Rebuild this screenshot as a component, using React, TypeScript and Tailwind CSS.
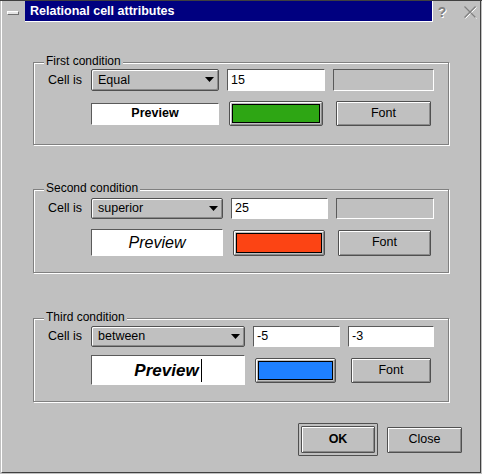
import type { ReactNode } from "react";

const raised =
  "border border-[#505050] bg-[#c0c0c0] shadow-[inset_1px_1px_0_#ffffff,inset_-1px_-1px_0_#8a8a8a]";
const sunken =
  "border border-t-[#5a5a5a] border-l-[#5a5a5a] border-b-white border-r-white";

function Combo({ value, className }: { value: string; className: string }) {
  return (
    <div className={`${raised} rounded-[2px] flex items-center justify-between pl-[6px] pr-[4px] ${className}`}>
      <span className="text-[12.5px] leading-none">{value}</span>
      <svg width="9" height="6" viewBox="0 0 9 6">
        <polygon points="0,0 9,0 4.5,5" fill="#000" />
      </svg>
    </div>
  );
}

function Field({ value, disabled, className }: { value?: string; disabled?: boolean; className: string }) {
  return (
    <div
      className={`${sunken} ${disabled ? "bg-[#c0c0c0]" : "bg-white"} flex items-center pl-[3px] text-[12.5px] leading-none ${className}`}
    >
      {value}
    </div>
  );
}

function Swatch({ color, className }: { color: string; className: string }) {
  return (
    <div className={`${raised} rounded-[2px] p-[2px] ${className}`}>
      <div className="h-full w-full border border-black" style={{ backgroundColor: color }} />
    </div>
  );
}

function Button({ label, bold, className }: { label: string; bold?: boolean; className: string }) {
  return (
    <div
      className={`${raised} rounded-[1px] flex items-center justify-center text-[12.5px] ${bold ? "font-bold" : ""} ${className}`}
    >
      {label}
    </div>
  );
}

function Group({ title, className, children }: { title: string; className: string; children: ReactNode }) {
  return (
    <div className={`relative w-[416px] border border-[#808080] shadow-[inset_1px_1px_0_#ffffff,1px_1px_0_#ffffff] pl-[14px] ${className}`}>
      <span className="absolute left-[10px] -top-[9px] bg-[#c0c0c0] px-[2px] text-[12px] leading-[14px]">
        {title}
      </span>
      {children}
    </div>
  );
}

export default function App() {
  return (
    <div className="w-[482px] h-[474px] bg-[#c0c0c0] border-t border-t-[#404040] font-['Liberation_Sans',Arial,sans-serif] text-black">
      <div className="ml-[1px] w-[480px] h-[472px] border-l border-l-white border-r border-r-[#404040] border-b border-b-[#404040] flex flex-col">
        {/* title bar */}
        <div className="flex h-[21px] shrink-0">
          <div className="w-[23px] flex items-center">
            <div className="ml-[5px] mt-[2px] h-[4px] w-[12px] border border-t-white border-l-white border-b-[#707070] border-r-[#707070] bg-[#e4e4e4]" />
          </div>
          <div className="w-[408px] bg-[#000080] border-r border-b border-white flex items-center pl-[5px]">
            <span className="text-white font-bold text-[12.5px] leading-none">Relational cell attributes</span>
          </div>
          <div className="flex items-center flex-1">
            <span className="ml-[4px] w-[10px] text-center font-bold text-[14px] leading-none text-[#808080] [text-shadow:1px_1px_0_#ffffff]">
              ?
            </span>
            <svg className="ml-[16px]" width="14" height="14" viewBox="0 0 14 14">
              <path d="M1.5 1.5 L12.5 12.5 M12.5 1.5 L1.5 12.5" stroke="#ffffff" strokeWidth="1" transform="translate(1,1)" />
              <path d="M1.5 1.5 L12.5 12.5 M12.5 1.5 L1.5 12.5" stroke="#808080" strokeWidth="1.2" />
            </svg>
          </div>
        </div>

        <div className="pl-[31px] flex flex-col">
          <Group title="First condition" className="mt-[40px] pt-[6px] pb-[18px]">
            <div className="grid grid-cols-[35px_128px_98px_101px] gap-x-[8px] gap-y-[10px] items-center">
              <span className="text-[12.5px] leading-none">Cell is</span>
              <Combo value="Equal" className="h-[22px]" />
              <Field value="15" className="h-[22px]" />
              <Field disabled className="h-[22px]" />
              <span />
              <div className={`${sunken} bg-white h-[22px] flex items-center justify-center font-bold text-[12.5px]`}>
                Preview
              </div>
              <Swatch color="#2ea614" className="h-[25px] mx-[2px]" />
              <Button label="Font" className="h-[25px] mx-[3px]" />
            </div>
          </Group>

          <Group title="Second condition" className="mt-[44px] pt-[8px] pb-[16px]">
            <div className="grid grid-cols-[35px_132px_97px_98px] gap-x-[8px] gap-y-[10px] items-center">
              <span className="text-[12.5px] leading-none">Cell is</span>
              <Combo value="superior" className="h-[21px]" />
              <Field value="25" className="h-[21px]" />
              <Field disabled className="h-[21px]" />
              <span />
              <div className={`${sunken} bg-white h-[27px] flex items-center justify-center italic font-normal text-[16px]`}>
                Preview
              </div>
              <Swatch color="#fc4414" className="h-[26px] ml-[2px] mr-[3px]" />
              <Button label="Font" className="h-[26px] ml-[2px] mr-[3px]" />
            </div>
          </Group>

          <Group title="Third condition" className="mt-[45px] pt-[7px] pb-[16px]">
            <div className="grid grid-cols-[35px_154px_87px_86px] gap-x-[8px] gap-y-[8px] items-center">
              <span className="text-[12.5px] leading-none">Cell is</span>
              <Combo value="between" className="h-[21px]" />
              <Field value="-5" className="h-[21px]" />
              <Field value="-3" className="h-[21px]" />
              <span />
              <div className={`${sunken} bg-white h-[30px] flex items-center justify-center`}>
                <span className="italic font-bold text-[17px] leading-none">Preview</span>
                <span className="ml-[2px] inline-block w-[1px] h-[23px] bg-black" />
              </div>
              <Swatch color="#1e80ff" className="h-[25px] ml-[2px] mr-[4px]" />
              <Button label="Font" className="h-[25px] mx-[3px]" />
            </div>
          </Group>
        </div>

        <div className="mt-[21px] flex justify-end items-center gap-[9px] pr-[18px]">
          <div className="border border-[#505050] p-[2px] rounded-[1px]">
            <Button label="OK" bold className="w-[74px] h-[27px]" />
          </div>
          <Button label="Close" className="w-[75px] h-[26px]" />
        </div>
      </div>
    </div>
  );
}
